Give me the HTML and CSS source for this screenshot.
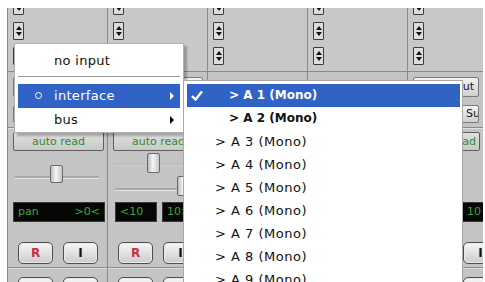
FILE: index.html
```html
<!DOCTYPE html>
<html lang="en">
<head>
<meta charset="UTF-8" />
<meta name="viewport" content="width=device-width, initial-scale=1.0">
<title>Mixer input</title>
<link rel="stylesheet" href="styles.css">
</head>
<body>

<div class="mixer">
  <div class="strip">
    <div class="inserts">
      <span class="spin"></span><span class="spin"></span><span class="spin"></span>
    </div>
    <div class="io">
      <div class="io-btn"></div>
      <div class="io-btn"></div>
    </div>
    <div class="auto">auto read</div>
    <div class="fader">
      <div class="track t-main"><span class="thumb th-1"></span></div>
    </div>
    <div class="disp"><div class="lcd lcd-wide"><span>pan</span><span>&gt;0&lt;</span></div></div>
    <div class="btns"><span class="btn rec">R</span><span class="btn">I</span></div>
    <div class="sep"></div>
    <div class="btns btns-low"><span class="btn"></span><span class="btn"></span></div>
  </div>

  <div class="strip">
    <div class="inserts">
      <span class="spin"></span><span class="spin"></span><span class="spin"></span>
    </div>
    <div class="io">
      <div class="io-btn"></div>
      <div class="io-btn"></div>
    </div>
    <div class="auto">auto read</div>
    <div class="fader">
      <div class="track t-up"><span class="thumb th-2"></span></div>
      <div class="track t-down"><span class="thumb th-3"></span></div>
    </div>
    <div class="disp"><div class="lcd">&lt;10</div><div class="lcd">10&gt;</div></div>
    <div class="btns"><span class="btn rec">R</span><span class="btn">I</span></div>
    <div class="sep"></div>
    <div class="btns btns-low"><span class="btn"></span><span class="btn"></span></div>
  </div>

  <div class="strip">
    <div class="inserts">
      <span class="spin"></span><span class="spin"></span><span class="spin"></span>
    </div>
    <div class="io io-hidden"></div>
  </div>

  <div class="strip">
    <div class="inserts">
      <span class="spin"></span><span class="spin"></span><span class="spin"></span>
    </div>
    <div class="io io-hidden"></div>
  </div>

  <div class="strip strip-last">
    <div class="inserts">
      <span class="spin"></span><span class="spin"></span><span class="spin"></span>
    </div>
    <div class="io">
      <div class="io-btn io-r">input</div>
      <div class="io-btn io-l">Su</div>
    </div>
    <div class="auto auto-r">auto read</div>
    <div class="fader"></div>
    <div class="disp"><div class="lcd">&lt;10</div><div class="lcd">10</div></div>
    <div class="btns"><span class="btn rec">R</span><span class="btn">I</span></div>
    <div class="sep"></div>
    <div class="btns btns-low"><span class="btn"></span><span class="btn"></span></div>
  </div>
</div>

<div class="menu menu-main">
  <div class="item">no input</div>
  <div class="menu-sep"></div>
  <div class="item sel"><span class="dot"></span>interface<span class="arr"></span></div>
  <div class="item">bus<span class="arr"></span></div>
</div>

<div class="menu menu-sub">
  <div class="row sel bold">
    <svg class="check" width="12" height="11" viewBox="0 0 12 11"><path d="M1 6 L4.5 9.5 L11 1.5" fill="none" stroke="#fff" stroke-width="2.4"/></svg>
    &gt; A 1 (Mono)
  </div>
  <div class="row bold">&gt; A 2 (Mono)</div>
  <div class="row">&gt; A 3 (Mono)</div>
  <div class="row">&gt; A 4 (Mono)</div>
  <div class="row">&gt; A 5 (Mono)</div>
  <div class="row">&gt; A 6 (Mono)</div>
  <div class="row">&gt; A 7 (Mono)</div>
  <div class="row">&gt; A 8 (Mono)</div>
  <div class="row">&gt; A 9 (Mono)</div>
</div>

</body>
</html>
```

FILE: styles.css
```css
body {margin:0; background:#fff; font-family:'DejaVu Sans', Verdana, sans-serif; color:#111; position:relative; height:282px; overflow:hidden;}

/* mixer window */
.mixer {margin:8px 0 0 7px; width:476px; height:274px; display:flex; overflow:hidden; background:#c4c4c4;}
.strip {width:100px; flex:none; box-sizing:border-box; border-left:1px solid #8a8a8a; display:flex; flex-direction:column;}
.strip > * {flex:none;}
.strip-last {width:76px;}
.inserts {height:64px; box-sizing:border-box; padding-left:5px; display:flex; flex-direction:column; gap:7px; background:#c8c8c8; border-bottom:1px solid #8a8a8a;}
.spin {display:block; width:11px; height:18px; box-sizing:border-box; border:1px solid #3a3a3a; border-radius:1px; background:#dcdcdc; position:relative;}
.spin:first-child {margin-top:-11px;}
.spin::before, .spin::after {content:''; position:absolute; left:2px; border-left:3px solid transparent; border-right:3px solid transparent;}
.spin::before {top:3px; border-bottom:4px solid #111;}
.spin::after {bottom:3px; border-top:4px solid #111;}
.io {height:56px; box-sizing:border-box; padding:5px 4px 0 5px; border-bottom:1px solid #8a8a8a; box-shadow:0 1px 0 #e2e2e2;}
.io-btn {height:20px; box-sizing:border-box; margin-bottom:8px; border:1px solid #7a7a7a; border-radius:2px; background:linear-gradient(#f3f3f3,#cfcfcf); font-size:11px; line-height:18px; text-align:center; white-space:nowrap; overflow:hidden;}
.io-btn + .io-btn {height:18px; line-height:16px; margin-bottom:0;}
.io-r {text-align:right; padding-right:4px;}
.io-l {text-align:left; padding-left:52px;}
.auto {margin:4px 3px 0 5px; height:19px; box-sizing:border-box; border:1px solid #5e5e5e; border-radius:2px; background:linear-gradient(#dedede,#c9c9c9); color:#2e8a2e; font-size:11px; line-height:17px; text-align:center; white-space:nowrap; overflow:hidden;}
.auto-r {text-align:right; padding-right:3px;}
.fader {height:48px; display:flex; flex-direction:column;}
.track {height:2px; margin-left:7px; margin-right:8px; background:#a8a8a8; border-bottom:1px solid #e6e6e6; position:relative;}
.t-main {margin-top:25px;}
.t-up {margin-top:12px; background:#bdbdbd; border-bottom-color:#cfcfcf;}
.t-down {margin-top:22px; margin-right:0;}
.thumb {position:absolute; width:13px; height:18px; box-sizing:border-box; border:1px solid #6a6a6a; border-radius:2px; background:linear-gradient(90deg,#bcbcbc,#f6f6f6 45%,#c4c4c4);}
.th-1 {left:35px; top:-11px;}
.th-2 {left:32px; top:-10px; height:20px;}
.th-3 {left:62px; top:-12px; height:20px;}
.disp {margin:3px 0 0 7px; height:20px; display:flex; gap:5px;}
.lcd {width:42px; flex:none; box-sizing:border-box; padding:0 4px; background:#050805; border:1px solid #3a3a3a; color:#3fa53f; font-size:11px; line-height:18px; white-space:nowrap; overflow:hidden; display:flex; justify-content:space-between;}
.strip:first-child .disp {margin-left:5px;}
.lcd-wide {width:92px;}
.btns {margin:20px 0 0 10px; height:22px; display:flex; gap:10px;}
.btn {width:35px; height:22px; flex:none; box-sizing:border-box; border:1px solid #4e4e4e; border-radius:5px; background:linear-gradient(#f7f7f7,#cbcbcb); box-shadow:inset 0 0 0 1px #e9e9e9; font-size:12px; font-weight:bold; line-height:20px; text-align:center;}
.rec {color:#c4304a;}
.sep {margin-top:3px; height:1px; background:#8e8e8e; border-bottom:1px solid #dedede;}
.btns-low {margin-top:8px;}

/* popup menus */
.menu {position:absolute; background:#fff; box-sizing:border-box;}
.menu-main {left:14px; top:43px; width:170px; height:90px; padding-top:5px; border:1px solid #b0b0b0; box-shadow:3px 3px 2px rgba(0,0,0,0.25); font-size:13px; letter-spacing:0.3px;}
.item {height:24px; margin:0 3px; padding-left:36px; line-height:23px; position:relative;}
.menu-sep {margin:3px 3px 6px; height:1px; background:#9a9a9a; border-bottom:1px solid #fff;}
.item.sel, .row.sel {background:#3063c5; color:#fff;}
.dot {position:absolute; left:17px; top:8px; width:5px; height:5px; border:1px solid #fff; border-radius:50%; background:#3063c5;}
.arr {position:absolute; right:6px; top:8px; border-top:4px solid transparent; border-bottom:4px solid transparent; border-left:4px solid #000;}
.sel .arr {border-left-color:#fff;}
.menu-sub {left:183px; top:80px; width:280px; height:210px; padding:3px 2px 0 3px; border:1px solid #a9a9a9; font-size:13px; letter-spacing:0.5px;}
.row {height:23px; padding-left:28px; line-height:23px; position:relative; white-space:nowrap;}
.row.bold {padding-left:42px; font-weight:bold; font-size:12px; letter-spacing:0;}
.check {position:absolute; left:4px; top:6px;}
```
